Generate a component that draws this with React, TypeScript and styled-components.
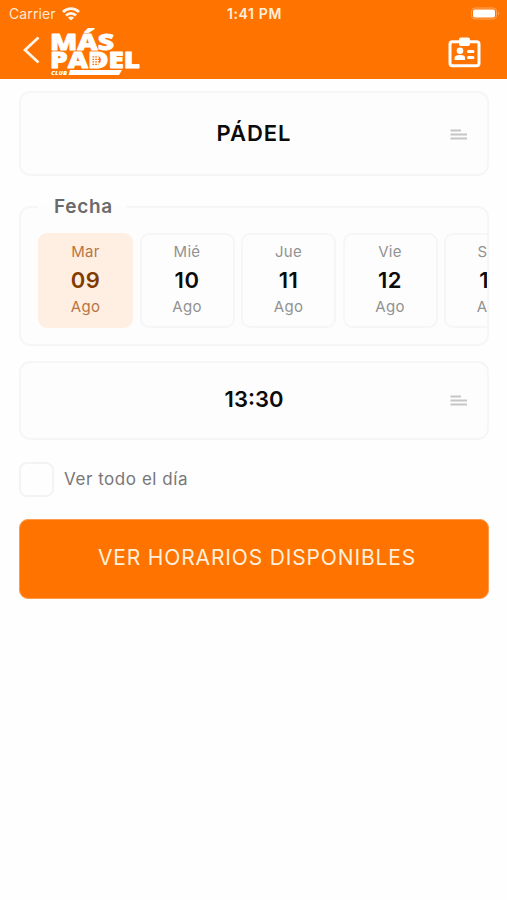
import React from "react";
import styled, { createGlobalStyle } from "styled-components";

const GlobalStyle = createGlobalStyle`
  * { box-sizing: border-box; }
  body { margin: 0; background: #fefefe; font-family: Inter, "Liberation Sans", sans-serif; }
`;

const Screen = styled.div`
  width: 507px;
  height: 900px;
  overflow: hidden;
  background: #fefefe;
`;

const Header = styled.header`
  height: 79px;
  background: #ff7300;
  color: #fff;
`;

const StatusBar = styled.div`
  display: grid;
  grid-template-columns: 1fr auto 1fr;
  align-items: center;
  height: 27px;
  padding: 0 7px 0 9px;
`;

const Carrier = styled.span`
  display: flex;
  align-items: center;
  gap: 6px;
  font-size: 14px;
  line-height: 27px;
  letter-spacing: 0.1px;
  color: #ffe9d2;
`;

const Clock = styled.span`
  font-size: 14px;
  font-weight: 600;
  line-height: 27px;
  letter-spacing: 0.65px;
  color: #fff0dd;
`;

const Battery = styled.svg`
  justify-self: end;
`;

const NavBar = styled.nav`
  display: flex;
  align-items: flex-start;
  height: 52px;
  padding: 0 26px 0 23px;
`;

const IconButton = styled.button<{ $top: number }>`
  display: block;
  padding: 0;
  border: 0;
  background: none;
  margin-top: ${(p) => p.$top}px;
  line-height: 0;
`;

const Logo = styled.svg`
  margin: 1px auto 0 9px;
`;

const Content = styled.main`
  display: flex;
  flex-direction: column;
  padding: 12px 18px 0 19px;
`;

const SelectBox = styled.button<{ $height: number; $lift?: number }>`
  display: grid;
  grid-template-columns: 40px 1fr 40px;
  align-items: center;
  height: ${(p) => p.$height}px;
  padding: 0 8px ${(p) => p.$lift ?? 2}px 8px;
  border: 2px solid #f6f6f6;
  border-radius: 11px;
  background: #fdfdfd;
  font-family: inherit;
`;

const SelectValue = styled.span<{ $spacing?: number }>`
  grid-column: 2;
  font-size: 22px;
  font-weight: 600;
  line-height: 28px;
  letter-spacing: ${(p) => p.$spacing ?? 0}px;
  color: #0b0b0b;
  text-align: center;
`;

const MenuMark = styled.svg`
  justify-self: center;
  margin-top: 3px;
`;

const DateGroup = styled.fieldset`
  min-width: 0;
  height: 150px;
  margin: 20px 0 15px;
  padding: 16px 0 0 17px;
  border: 2px solid #f6f6f6;
  border-radius: 11px;
  background: #fdfdfd;
`;

const DateLegend = styled.legend`
  height: 21px;
  padding: 1px 14px 0 16px;
  font-size: 19px;
  font-weight: 600;
  line-height: 20px;
  letter-spacing: 0.7px;
  color: #6a6a6a;
`;

const DateStrip = styled.div`
  display: flex;
  gap: 6.5px;
  overflow: hidden;
`;

const DateCard = styled.button<{ $active?: boolean }>`
  display: flex;
  flex: 0 0 95px;
  flex-direction: column;
  align-items: center;
  height: 95px;
  padding: 7px 0 0;
  border: 2px solid ${(p) => (p.$active ? "#ffeee2" : "#f6f6f6")};
  border-radius: 9px;
  background: ${(p) => (p.$active ? "#ffeee2" : "#fdfdfd")};
  color: ${(p) => (p.$active ? "#b87543" : "#929292")};
  font-family: inherit;
`;

const DateText = styled.span`
  font-size: 15px;
  line-height: 20px;
  letter-spacing: 0.3px;
`;

const DayNumber = styled.span<{ $active?: boolean }>`
  margin: 6px 0 4px;
  font-size: 22px;
  font-weight: 600;
  line-height: 25px;
  letter-spacing: 0.5px;
  color: ${(p) => (p.$active ? "#803b00" : "#0b0b0b")};
`;

const CheckRow = styled.label`
  display: flex;
  align-items: center;
  gap: 10px;
  height: 35px;
  margin: 22px 0;
  font-size: 17px;
  line-height: 33px;
  letter-spacing: 0.55px;
  color: #777;
`;

const CheckLabel = styled.span`
  line-height: 35px;
`;

const CheckBox = styled.input`
  appearance: none;
  width: 35px;
  height: 35px;
  margin: 0;
  border: 2px solid #f3f3f3;
  border-radius: 8px;
  background: #fefefe;
`;

const SubmitButton = styled.button`
  height: 80px;
  padding: 0 0 3px 6px;
  border: 1px solid #ff9b4d;
  border-radius: 9px;
  background: #ff7300;
  color: #fff0dc;
  font-family: inherit;
  font-size: 21px;
  font-weight: 400;
  letter-spacing: 0.85px;
`;

const days = [
  { week: "Mar", day: "09", active: true },
  { week: "Mié", day: "10" },
  { week: "Jue", day: "11" },
  { week: "Vie", day: "12" },
  { week: "Sáb", day: "13" },
];

function Lines() {
  return (
    <MenuMark width="18" height="11" viewBox="0 0 18 11" stroke="#c6c6c6" strokeWidth="2">
      <path d="M.5 1.5H11M.5 5.5H17M.5 9.5H17" />
    </MenuMark>
  );
}

export default function App() {
  return (
    <Screen>
      <GlobalStyle />
      <Header>
        <StatusBar>
          <Carrier>
            Carrier
            <svg width="18" height="14" viewBox="0 0 18 14" fill="none" stroke="#fff4e6" strokeWidth="2.8">
              <path d="M1 5C5.6 .6 12.4 .6 17 5M4 8.5C6.8 5.7 11.2 5.7 14 8.5" />
              <path d="M6 10.7C7.7 9.2 10.3 9.2 12 10.7L9 13.6Z" fill="#fff4e6" stroke="none" />
            </svg>
          </Carrier>
          <Clock>1:41 PM</Clock>
          <Battery width="29" height="14" viewBox="0 0 29 14">
            <rect x=".5" y="1" width="25" height="11" rx="3.5" fill="none" stroke="#ffa65c" />
            <rect x="2" y="2.5" width="22" height="8" rx="2" fill="#fff" />
            <path d="M27 4.8Q29 6.5 27 8.2Z" fill="#ffa65c" />
          </Battery>
        </StatusBar>
        <NavBar>
          <IconButton $top={9} aria-label="Volver">
            <svg width="18" height="28" viewBox="0 0 18 28" fill="none" stroke="#fff5e9" strokeWidth="2.7">
              <path d="M15.5 1.5L2 14L15.5 26.5" />
            </svg>
          </IconButton>
          <Logo width="92" height="50" viewBox="0 0 92 50" fill="#fff" fontFamily="'Open Sans', Lato, sans-serif" fontWeight="800">
            <g stroke="#fff" strokeWidth=".8" strokeLinejoin="round">
              <text x="0" y="21.5" fontSize="22" textLength="64" lengthAdjust="spacingAndGlyphs">MÁS</text>
              <text x="0" y="40" fontSize="22" textLength="90" lengthAdjust="spacingAndGlyphs">PADEL</text>
            </g>
            <rect x="43" y="28" width="6" height="8.5" />
            <path d="M42.5 28.8H48.5M42.5 31.3H50M42.5 33.8H50M42.5 36.3H48.5" stroke="#ff7300" strokeWidth="1.3" strokeDasharray="1.7 1" />
            <text x="1" y="46.8" fontSize="5.5" fontStyle="italic" textLength="16" lengthAdjust="spacingAndGlyphs">CLUB</text>
            <path d="M20 42H72L69 47H18.5Z" />
          </Logo>
          <IconButton $top={10} aria-label="Credencial">
            <svg width="33" height="31" viewBox="0 0 33 31">
              <rect x="2" y="4.8" width="29" height="24" rx="2.5" fill="none" stroke="#fff" strokeWidth="3" />
              <rect x="11" y=".5" width="11" height="8.5" rx="2" fill="#fff" />
              <circle cx="12" cy="13.8" r="3.3" fill="#fff" />
              <path d="M6.5 23V21Q6.5 18 12 18T17 21V23Z" fill="#fff" />
              <path d="M20.5 14.5H25M20.5 20.5H25" stroke="#fff" strokeWidth="3" strokeLinecap="round" />
            </svg>
          </IconButton>
        </NavBar>
      </Header>
      <Content>
        <SelectBox $height={85}>
          <SelectValue $spacing={1}>PÁDEL</SelectValue>
          <Lines />
        </SelectBox>
        <DateGroup>
          <DateLegend>Fecha</DateLegend>
          <DateStrip>
            {days.map((d) => (
              <DateCard key={d.day} $active={d.active}>
                <DateText>{d.week}</DateText>
                <DayNumber $active={d.active}>{d.day}</DayNumber>
                <DateText>Ago</DateText>
              </DateCard>
            ))}
          </DateStrip>
        </DateGroup>
        <SelectBox $height={79} $lift={4}>
          <SelectValue>13:30</SelectValue>
          <Lines />
        </SelectBox>
        <CheckRow>
          <CheckBox type="checkbox" />
          <CheckLabel>Ver todo el día</CheckLabel>
        </CheckRow>
        <SubmitButton>VER HORARIOS DISPONIBLES</SubmitButton>
      </Content>
    </Screen>
  );
}
